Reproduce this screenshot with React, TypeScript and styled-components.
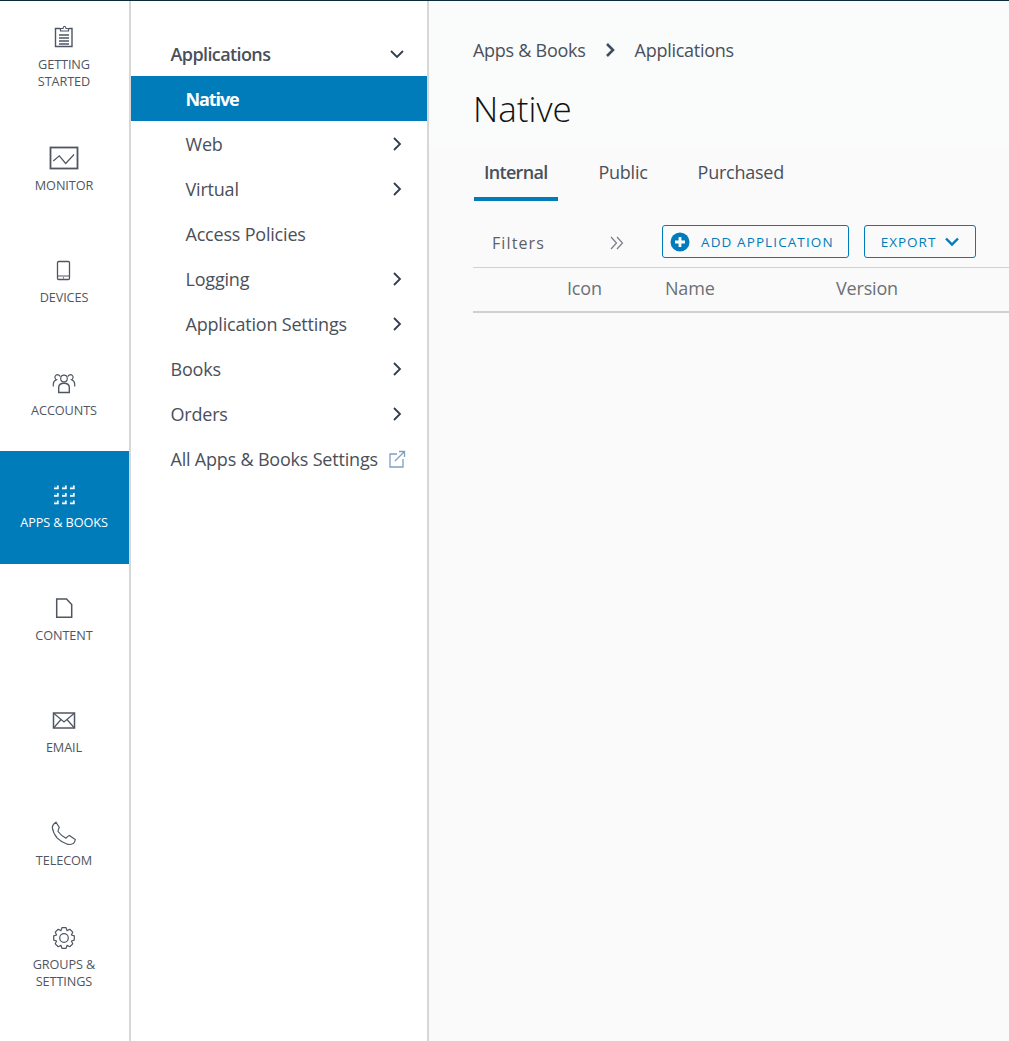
import React from "react";
import styled, { createGlobalStyle } from "styled-components";

const BLUE = "#007cbb";
const INK = "#49505a";

const GlobalStyle = createGlobalStyle`
  html, body {
    margin: 0;
    padding: 0;
    background: #fafafa;
    font-family: "Open Sans", "Noto Sans", sans-serif;
  }
  * {
    box-sizing: border-box;
  }
`;

const Page = styled.div`
  width: 1009px;
  height: 1041px;
  display: flex;
  flex-direction: column;
  overflow: hidden;
`;

const TopLine = styled.div`
  height: 1px;
  flex: none;
  background: #0c2b3d;
`;

const Body = styled.div`
  flex: 1;
  display: flex;
  min-height: 0;
`;

const Rail = styled.nav`
  width: 131px;
  flex: none;
  background: #fff;
  border-right: 2px solid #d7d7d7;
  display: flex;
  flex-direction: column;
`;

const RailItem = styled.div<{ $active?: boolean }>`
  height: 112.5px;
  flex: none;
  padding-right: 1px;
  display: flex;
  flex-direction: column;
  align-items: center;
  justify-content: center;
  gap: 7px;
  background: ${({ $active }) => ($active ? BLUE : "transparent")};
  color: ${({ $active }) => ($active ? "#fff" : "#4f5662")};
`;

const RailIcon = styled.svg`
  width: 24px;
  height: 24px;
  display: block;
  overflow: visible;
  fill: none;
  stroke: currentColor;
  stroke-width: 1.2;
`;

const RailLabel = styled.div`
  font-size: 12.7px;
  line-height: 17px;
  letter-spacing: -0.1px;
  text-align: center;
  text-transform: uppercase;
`;

const SubNav = styled.nav`
  width: 298px;
  flex: none;
  background: #fff;
  border-right: 2px solid #d7d7d7;
  padding-top: 30px;
`;

const SubRow = styled.div<{ $active?: boolean; $child?: boolean; $strong?: boolean }>`
  height: 45px;
  display: flex;
  align-items: center;
  justify-content: space-between;
  padding: 0 22px 0 ${({ $child }) => ($child ? "54.5px" : "39.5px")};
  font-size: 18px;
  letter-spacing: ${({ $active, $strong }) => ($active ? "-1.1px" : $strong ? "-0.6px" : "-0.2px")};
  font-weight: ${({ $active, $strong }) => ($active ? 700 : $strong ? 600 : 400)};
  background: ${({ $active }) => ($active ? BLUE : "transparent")};
  color: ${({ $active }) => ($active ? "#fff" : INK)};
`;

const Chevron = styled.svg`
  width: 16px;
  height: 16px;
  flex: none;
  fill: none;
  stroke: #333c4d;
  stroke-width: 1.8;
`;

const ExternalIcon = styled.svg`
  width: 18px;
  height: 18px;
  flex: none;
  margin-right: -1px;
  fill: none;
  stroke: #7f9fc0;
  stroke-width: 1.3;
`;

const Main = styled.main`
  flex: 1;
  min-width: 0;
  background: #fafafa;
`;

const Header = styled.header`
  height: 147px;
  padding: 35px 0 0 44px;
  background: #fafbfb;
`;

const Crumbs = styled.div`
  display: flex;
  align-items: center;
  height: 27px;
  font-size: 18px;
  letter-spacing: -0.27px;
  color: ${INK};
`;

const CrumbArrow = styled.svg`
  width: 14px;
  height: 16px;
  margin: 0 17px 0 18px;
  fill: none;
  stroke: #414d5c;
  stroke-width: 2.6;
`;

const Title = styled.h1`
  margin: 23px 0 0;
  font-size: 35px;
  line-height: 46px;
  font-weight: 300;
  color: #111;
`;

const Content = styled.div`
  padding-left: 44px;
`;

const Tabs = styled.div`
  display: flex;
  height: 53px;
  gap: 30px;
  padding-left: 1px;
`;

const Tab = styled.div<{ $active?: boolean }>`
  height: 53px;
  padding: 12px ${({ $active }) => ($active ? "11px" : "10px")} 0 10px;
  font-size: 18px;
  line-height: 25px;
  letter-spacing: ${({ $active }) => ($active ? "-0.7px" : "-0.25px")};
  font-weight: ${({ $active }) => ($active ? 600 : 400)};
  color: ${INK};
  border-bottom: 4px solid ${({ $active }) => ($active ? BLUE : "transparent")};
`;

const Toolbar = styled.div`
  height: 67px;
  display: flex;
  align-items: flex-start;
  border-bottom: 1px solid #ccd3d8;
  padding-top: 24px;
`;

const FiltersLabel = styled.div`
  width: 137px;
  padding-left: 19px;
  font-size: 16px;
  line-height: 36px;
  letter-spacing: 1.1px;
  color: #5b6068;
`;

const DoubleArrow = styled.svg`
  width: 14px;
  height: 14px;
  margin-top: 11px;
  margin-right: 38px;
  flex: none;
  fill: none;
  stroke: #7b7d86;
  stroke-width: 1.2;
`;

const OutlineButton = styled.div<{ $wide?: boolean }>`
  height: 33px;
  display: flex;
  align-items: center;
  border: 1px solid ${BLUE};
  border-radius: 3px;
  color: ${BLUE};
  font-size: 13.5px;
  letter-spacing: ${({ $wide }) => ($wide ? "1.1px" : "1px")};
  padding: ${({ $wide }) => ($wide ? "0 14px 0 7px" : "0 15px 0 16px")};
  margin-right: ${({ $wide }) => ($wide ? "15px" : "0")};
  gap: ${({ $wide }) => ($wide ? "11px" : "8px")};
`;

const PlusIcon = styled.svg`
  width: 20px;
  height: 20px;
  flex: none;
`;

const ButtonChevron = styled.svg`
  width: 16px;
  height: 14px;
  flex: none;
  fill: none;
  stroke: ${BLUE};
  stroke-width: 2.4;
`;

const HeadRow = styled.div`
  height: 45px;
  display: grid;
  grid-template-columns: 94px 98px 171px 1fr;
  align-items: center;
  padding-bottom: 4px;
  border-bottom: 2px solid #cfcfcf;
  font-size: 18px;
  letter-spacing: -0.18px;
  color: #6c7077;
`;

// eight-tooth outline round the given centre
function gearPath(cx: number, cy: number, outer: number, inner: number) {
  const points: string[] = [];
  for (let i = 0; i < 8; i++) {
    const a = (i * Math.PI) / 4 - Math.PI / 2;
    [
      [inner, -0.39],
      [outer, -0.2],
      [outer, 0.2],
      [inner, 0.39],
    ].forEach(([r, d]) => {
      points.push(`${(cx + r * Math.cos(a + d)).toFixed(2)} ${(cy + r * Math.sin(a + d)).toFixed(2)}`);
    });
  }
  return `M${points.join("L")}z`;
}

const appMarks = [2.5, 10, 17.5].flatMap((y) =>
  [2, 10, 18].map((x) => ({ x, y }))
);

const icons: Record<string, React.ReactNode> = {
  getting: (
    <>
      <path d="M8 3.500H3.500v18h16.500v-18H17" strokeWidth="1.400" />
      <path d="M8.500 6V3.500h2.500c.3-3 2.700-3 3 0h2.500V6z" />
      <path d="M7 10h10M7 13h10M7 16h10M7 19h10" strokeWidth="1.400" />
    </>
  ),
  monitor: (
    <>
      <rect x="-1.500" y="1.500" width="27" height="21" strokeWidth="1.800" />
      <path d="M1.300 15l6-5.200 6.400 7.700L22 8.500" />
    </>
  ),
  devices: (
    <>
      <rect x="5.500" y="3.500" width="12" height="18" rx="1.200" strokeWidth="1.300" />
      <path d="M5.500 18h12M11 19.800h1" />
    </>
  ),
  accounts: (
    <>
      <circle cx="12" cy="7.500" r="3.300" />
      <path d="M6.700 21.500v-5c0-2.500 2-4.300 5.300-4.300s5.300 1.800 5.300 4.300v5z" strokeWidth="1.400" />
      <path d="M8 5.500a2.600 2.600 0 1 0-3.500 3.200c-2 .7-3.200 2.300-3.200 4.300v2.500M16 5.500a2.600 2.600 0 1 1 3.500 3.200c2 .7 3.200 2.300 3.200 4.300v2.500" />
    </>
  ),
  content: <path d="M4.700 3h9.800l5.200 5.500v12.800h-15z" strokeWidth="1.500" />,
  email: (
    <>
      <rect x="1.500" y="5" width="21" height="15" strokeWidth="1.500" />
      <path d="M2 5.500l10 8.500 10-8.500M2 19.500l7-8M22 19.500l-7-8" />
    </>
  ),
  telecom: (
    <path d="M4 1.200L7.300 6.500Q6 8.500 6 10.500Q9 14.500 14 17.200Q15.500 15.500 17.300 14.500L23.300 18.500Q23 21 21.300 22.500Q18 24 15.300 23.200Q9 21 5.300 17.200Q1 12 .3 6.500Q.3 3.500 4 1.200z" />
  ),
  groups: (
    <>
      <circle cx="12" cy="13" r="4.300" />
      <path d={gearPath(12, 13, 10.5, 8)} strokeLinejoin="round" />
    </>
  ),
  apps: (
    <>
      {appMarks.map(({ x, y }) => (
        <React.Fragment key={`${x}-${y}`}>
          <rect x={x} y={y} width="3" height="2" fill="#fff" fillOpacity=".12" stroke="none" />
          <path d={`M${x + 3} ${y}h1.700v3.800h-4.700v-1.800h3z`} fill="#fff" stroke="none" />
        </React.Fragment>
      ))}
    </>
  ),
};

const railItems = [
  { key: "getting", label: ["Getting", "Started"] },
  { key: "monitor", label: ["Monitor"] },
  { key: "devices", label: ["Devices"] },
  { key: "accounts", label: ["Accounts"] },
  { key: "apps", label: ["Apps & Books"], active: true },
  { key: "content", label: ["Content"] },
  { key: "email", label: ["Email"] },
  { key: "telecom", label: ["Telecom"] },
  { key: "groups", label: ["Groups &", "Settings"] },
];

const subItems = [
  { text: "Applications", strong: true, icon: "down" },
  { text: "Native", child: true, active: true },
  { text: "Web", child: true, icon: "right" },
  { text: "Virtual", child: true, icon: "right" },
  { text: "Access Policies", child: true },
  { text: "Logging", child: true, icon: "right" },
  { text: "Application Settings", child: true, icon: "right" },
  { text: "Books", icon: "right" },
  { text: "Orders", icon: "right" },
  { text: "All Apps & Books Settings", icon: "external" },
];

function SubIcon({ kind }: { kind?: string }) {
  if (kind === "down") {
    return (
      <Chevron viewBox="0 0 16 16">
        <path d="M2 5l6 6 6-6" />
      </Chevron>
    );
  }
  if (kind === "right") {
    return (
      <Chevron viewBox="0 0 16 16">
        <path d="M5 2l6 6-6 6" />
      </Chevron>
    );
  }
  if (kind === "external") {
    return (
      <ExternalIcon viewBox="0 0 18 18">
        <path d="M9 4H2v13h13V9" />
        <path d="M7 11L16.500 1.500M11 1.500h5.500V7" />
      </ExternalIcon>
    );
  }
  return null;
}

export default function App() {
  return (
    <Page>
      <GlobalStyle />
      <TopLine />
      <Body>
        <Rail>
          {railItems.map((item) => (
            <RailItem key={item.key} $active={item.active}>
              <RailIcon viewBox="0 0 24 24">{icons[item.key]}</RailIcon>
              <RailLabel>
                {item.label.map((line) => (
                  <div key={line}>{line}</div>
                ))}
              </RailLabel>
            </RailItem>
          ))}
        </Rail>
        <SubNav>
          {subItems.map((item) => (
            <SubRow
              key={item.text}
              $active={item.active}
              $child={item.child}
              $strong={item.strong}
            >
              {item.text}
              <SubIcon kind={item.icon} />
            </SubRow>
          ))}
        </SubNav>
        <Main>
          <Header>
            <Crumbs>
              Apps &amp; Books
              <CrumbArrow viewBox="0 0 14 16">
                <path d="M3 2l6 6-6 6" />
              </CrumbArrow>
              Applications
            </Crumbs>
            <Title>Native</Title>
          </Header>
          <Content>
            <Tabs>
              <Tab $active>Internal</Tab>
              <Tab>Public</Tab>
              <Tab>Purchased</Tab>
            </Tabs>
            <Toolbar>
              <FiltersLabel>Filters</FiltersLabel>
              <DoubleArrow viewBox="0 0 14 14">
                <path d="M1 1l5.500 6-5.500 6M7 1l5.500 6-5.500 6" />
              </DoubleArrow>
              <OutlineButton $wide>
                <PlusIcon viewBox="0 0 20 20">
                  <circle cx="10" cy="10" r="9.500" fill={BLUE} />
                  <path d="M10 5v10M5 10h10" stroke="#fff" strokeWidth="2.800" />
                </PlusIcon>
                ADD APPLICATION
              </OutlineButton>
              <OutlineButton>
                EXPORT
                <ButtonChevron viewBox="0 0 16 14">
                  <path d="M2 3.500l6 6 6-6" />
                </ButtonChevron>
              </OutlineButton>
            </Toolbar>
            <HeadRow>
              <span />
              <span>Icon</span>
              <span>Name</span>
              <span>Version</span>
            </HeadRow>
          </Content>
        </Main>
      </Body>
    </Page>
  );
}
